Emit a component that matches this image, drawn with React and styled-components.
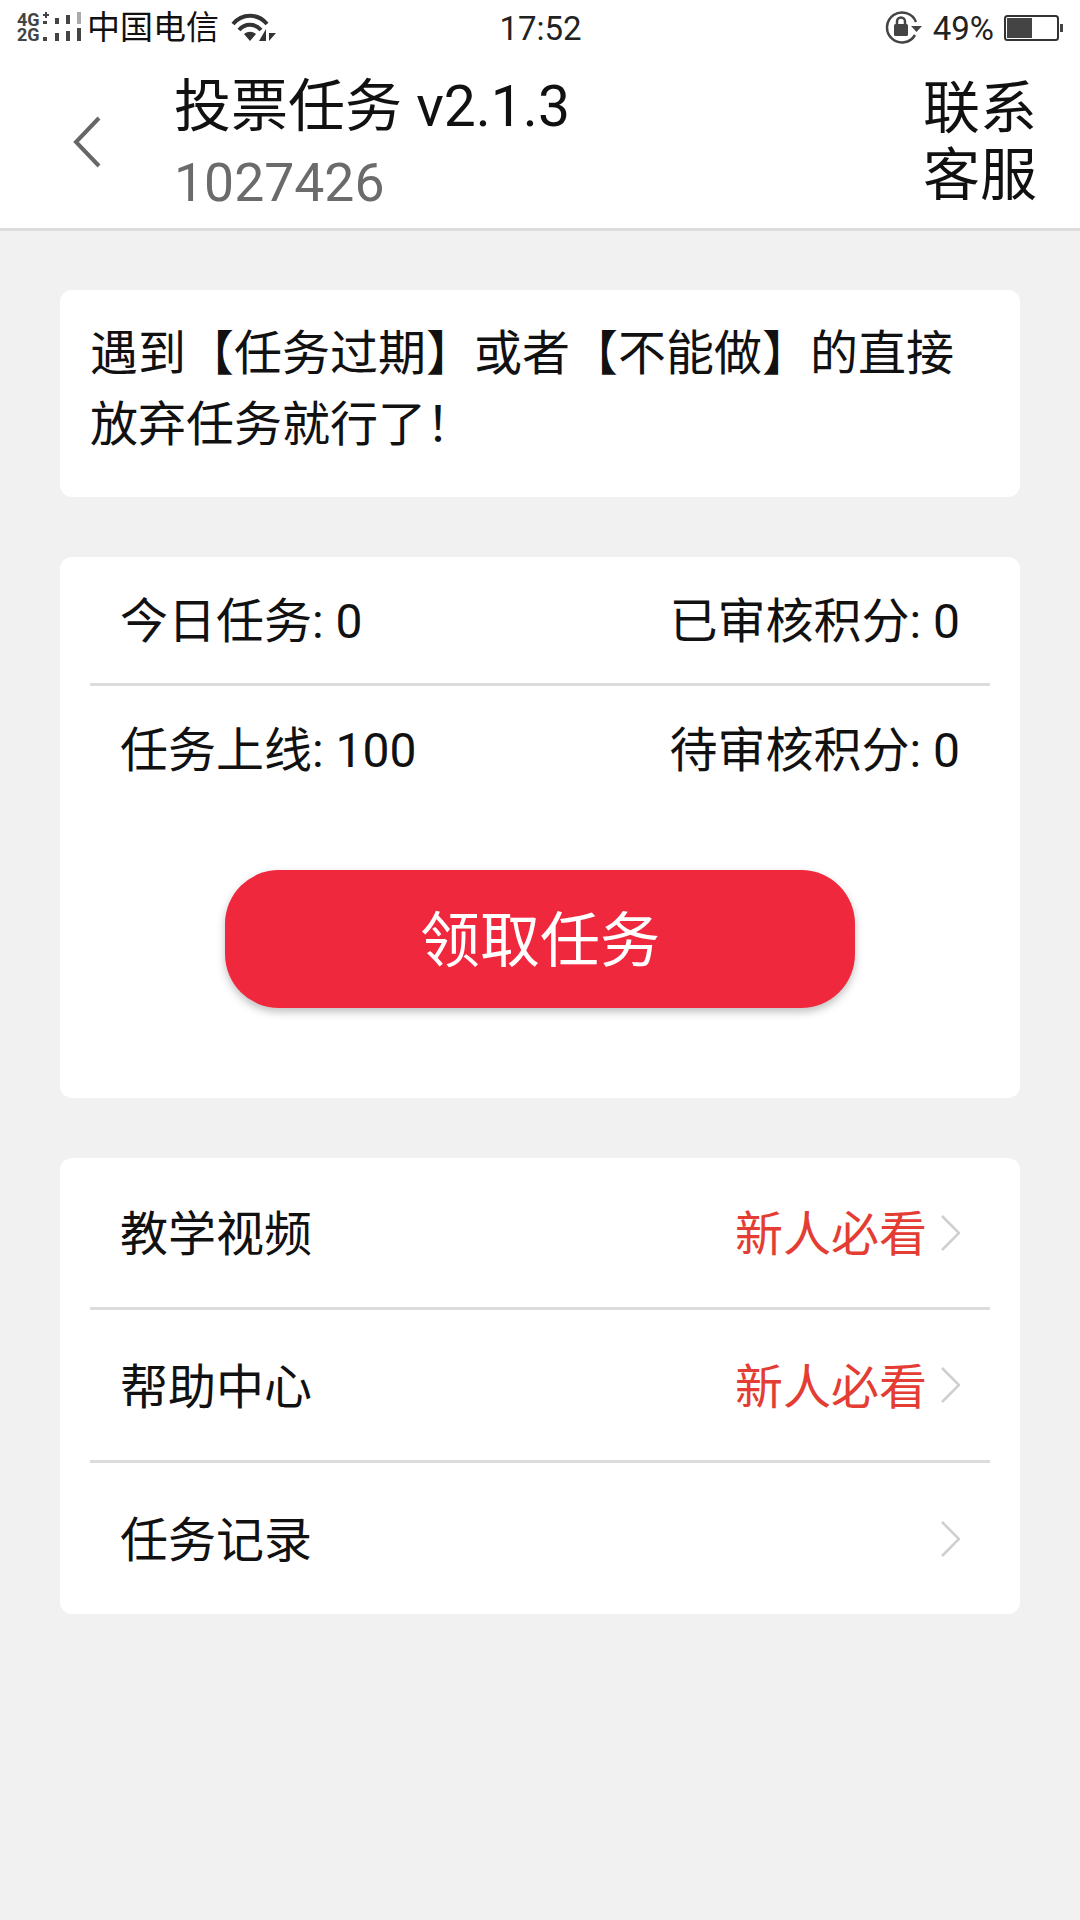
import React from "react";
import styled, { createGlobalStyle } from "styled-components";

const GlobalStyle = createGlobalStyle`
  html, body {
    margin: 0;
    padding: 0;
    background: #f1f1f1;
  }
  * {
    box-sizing: border-box;
  }
`;

const Page = styled.div`
  width: 1080px;
  height: 1920px;
  background: #f1f1f1;
  font-family: Roboto, "Noto Sans CJK SC", sans-serif;
  color: #111;
  overflow: hidden;
`;

const StatusBar = styled.div`
  height: 56px;
  background: #fff;
  display: grid;
  grid-template-columns: 1fr auto 1fr;
  align-items: center;
  padding: 0 16px 0 17px;
  font-size: 32px;
`;

const StatusLeft = styled.div`
  display: flex;
  align-items: center;
`;

const StatusRight = styled.div`
  display: flex;
  align-items: center;
  justify-content: flex-end;
`;

const NetLabels = styled.div`
  width: 26px;
  height: 32px;
  padding-bottom: 2px;
  display: flex;
  flex-direction: column;
  font-size: 18px;
  font-weight: 700;
  line-height: 15px;
  color: #444;
`;

const Carrier = styled.span`
  margin-left: 2px;
  font-size: 33px;
  line-height: 40px;
`;

const Clock = styled.span`
  font-size: 33px;
  color: #222;
`;

const Percent = styled.span`
  margin: 0 10px 0 10px;
  font-size: 33px;
  color: #222;
`;

const Header = styled.header`
  height: 175px;
  background: #fff;
  border-bottom: 3px solid #dcdcdc;
  display: flex;
  align-items: center;
  padding: 0 41px 0 73px;
`;

const BackIcon = styled.svg`
  width: 34px;
  height: 54px;
  flex: none;
`;

const TitleBlock = styled.div`
  margin-left: 67px;
  padding-top: 3px;
  flex: 1;
`;

const Title = styled.h1`
  margin: 0;
  font-size: 57px;
  font-weight: 400;
  line-height: 76px;
  color: #111;
`;

const SubTitle = styled.div`
  margin-top: 3px;
  font-size: 53.5px;
  line-height: 70px;
  color: #6b6b6b;
`;

const ServiceLink = styled.div`
  width: 116px;
  font-size: 57px;
  line-height: 67px;
  color: #111;
`;

const Content = styled.main`
  padding: 59px 60px 0;
  display: flex;
  flex-direction: column;
  gap: 60px;
`;

const Card = styled.section`
  background: #fff;
  border-radius: 12px;
  padding: ${({ $pad }) => $pad || "0 30px"};
`;

const Notice = styled.p`
  margin: 0;
  font-size: 48px;
  line-height: 71px;
  color: #111;
`;

const StatRow = styled.div`
  height: ${({ $h }) => $h}px;
  display: flex;
  align-items: center;
  justify-content: space-between;
  padding: 0 30px ${({ $lift }) => $lift}px;
  font-size: 48px;
  border-bottom: ${({ $line }) => ($line ? "3px solid #dcdcdc" : "none")};
`;

const ButtonWrap = styled.div`
  display: flex;
  justify-content: center;
  padding: 61px 0 90px;
`;

const ClaimButton = styled.button`
  width: 630px;
  height: 138px;
  padding: 0 0 7px;
  border: none;
  border-radius: 54px;
  background: #f0283e;
  color: #fff;
  font-family: inherit;
  font-size: 60px;
  box-shadow: 0 4px 8px rgba(0, 0, 0, 0.25);
`;

const ListRow = styled.div`
  height: ${({ $h }) => $h}px;
  display: flex;
  align-items: center;
  padding: 0 30px;
  font-size: 48px;
  border-bottom: ${({ $line }) => ($line ? "3px solid #dcdcdc" : "none")};
`;

const ListLabel = styled.span`
  flex: 1;
  padding-bottom: 5px;
`;

const ListHint = styled.span`
  padding-bottom: 5px;
  color: #e43d33;
`;

const Chevron = styled.svg`
  width: 20px;
  height: 36px;
  margin-left: 13px;
  flex: none;
`;

const SignalIcon = () => (
  <>
    <NetLabels>
      <span>4G</span>
      <span>2G</span>
    </NetLabels>
    <svg width="42" height="34" viewBox="26 0 42 34">
      <g fill="#444">
        <rect x="26" y="3" width="6" height="2" />
        <rect x="28" y="1" width="2" height="6" />
        <rect x="26" y="10" width="4" height="3" />
        <rect x="26" y="26" width="4" height="4" />
        <rect x="38" y="7" width="4" height="6" />
        <rect x="38" y="22" width="4" height="8" />
        <rect x="49" y="4" width="4" height="9" />
        <rect x="49" y="20" width="4" height="10" />
        <rect x="60" y="17" width="4" height="13" />
      </g>
      <rect x="60" y="1" width="4" height="12" fill="#aaa" />
    </svg>
  </>
);

const WifiIcon = () => (
  <svg width="46" height="30" viewBox="0 0 46 30" style={{ marginLeft: 12 }}>
    <g fill="none" stroke="#333" strokeWidth="4">
      <path d="M2 11 C11 0 27 0 36 11" />
      <path d="M8 17 C14 10 24 10 30 17" />
    </g>
    <path d="M13 21 L19 28 L25 21 C21 18 17 18 13 21Z" fill="#333" />
    <path d="M35 16 V28 L28 28Z M38 16 V28 L45 20 H38Z" fill="#333" />
  </svg>
);

const LockIcon = () => (
  <svg width="38" height="34" viewBox="0 0 38 34">
    <path d="M31 11 A15 15 0 1 0 30 24" fill="none" stroke="#444" strokeWidth="2.500" />
    <path d="M26 15 H37 L31.500 21Z" fill="#444" />
    <rect x="9" y="13" width="14" height="12" rx="1.500" fill="#444" />
    <path d="M12 14 V10.500 A4 4 0 0 1 20 10.500 V14" fill="none" stroke="#444" strokeWidth="2.500" />
  </svg>
);

const BatteryIcon = () => (
  <svg width="60" height="26" viewBox="0 0 60 26">
    <rect x="1" y="1" width="53" height="24" rx="2.500" fill="#fff" stroke="#333" strokeWidth="2" />
    <rect x="3" y="3" width="25" height="20" fill="#444" />
    <rect x="56" y="9" width="3" height="8" fill="#444" />
  </svg>
);

const ChevronRight = () => (
  <Chevron viewBox="0 0 20 36">
    <path d="M2 1 L19 18 L2 35" fill="none" stroke="#cfcfcf" strokeWidth="2.500" />
  </Chevron>
);

const App = () => {
  return (
    <Page>
      <GlobalStyle />
      <StatusBar>
        <StatusLeft>
          <SignalIcon />
          <Carrier>中国电信</Carrier>
          <WifiIcon />
        </StatusLeft>
        <Clock>17:52</Clock>
        <StatusRight>
          <LockIcon />
          <Percent>49%</Percent>
          <BatteryIcon />
        </StatusRight>
      </StatusBar>
      <Header>
        <BackIcon viewBox="0 0 34 54">
          <path d="M26 3 L3 27 L26 51" fill="none" stroke="#666" strokeWidth="4" />
        </BackIcon>
        <TitleBlock>
          <Title>投票任务 v2.1.3</Title>
          <SubTitle>1027426</SubTitle>
        </TitleBlock>
        <ServiceLink>联系客服</ServiceLink>
      </Header>
      <Content>
        <Card $pad="28px 30px 37px">
          <Notice>遇到【任务过期】或者【不能做】的直接放弃任务就行了！</Notice>
        </Card>
        <Card>
          <StatRow $h={129} $lift={6} $line>
            <span>今日任务: 0</span>
            <span>已审核积分: 0</span>
          </StatRow>
          <StatRow $h={123} $lift={3}>
            <span>任务上线: 100</span>
            <span>待审核积分: 0</span>
          </StatRow>
          <ButtonWrap>
            <ClaimButton>领取任务</ClaimButton>
          </ButtonWrap>
        </Card>
        <Card>
          <ListRow $h={152} $line>
            <ListLabel>教学视频</ListLabel>
            <ListHint>新人必看</ListHint>
            <ChevronRight />
          </ListRow>
          <ListRow $h={153} $line>
            <ListLabel>帮助中心</ListLabel>
            <ListHint>新人必看</ListHint>
            <ChevronRight />
          </ListRow>
          <ListRow $h={151}>
            <ListLabel>任务记录</ListLabel>
            <ChevronRight />
          </ListRow>
        </Card>
      </Content>
    </Page>
  );
};

export default App;
